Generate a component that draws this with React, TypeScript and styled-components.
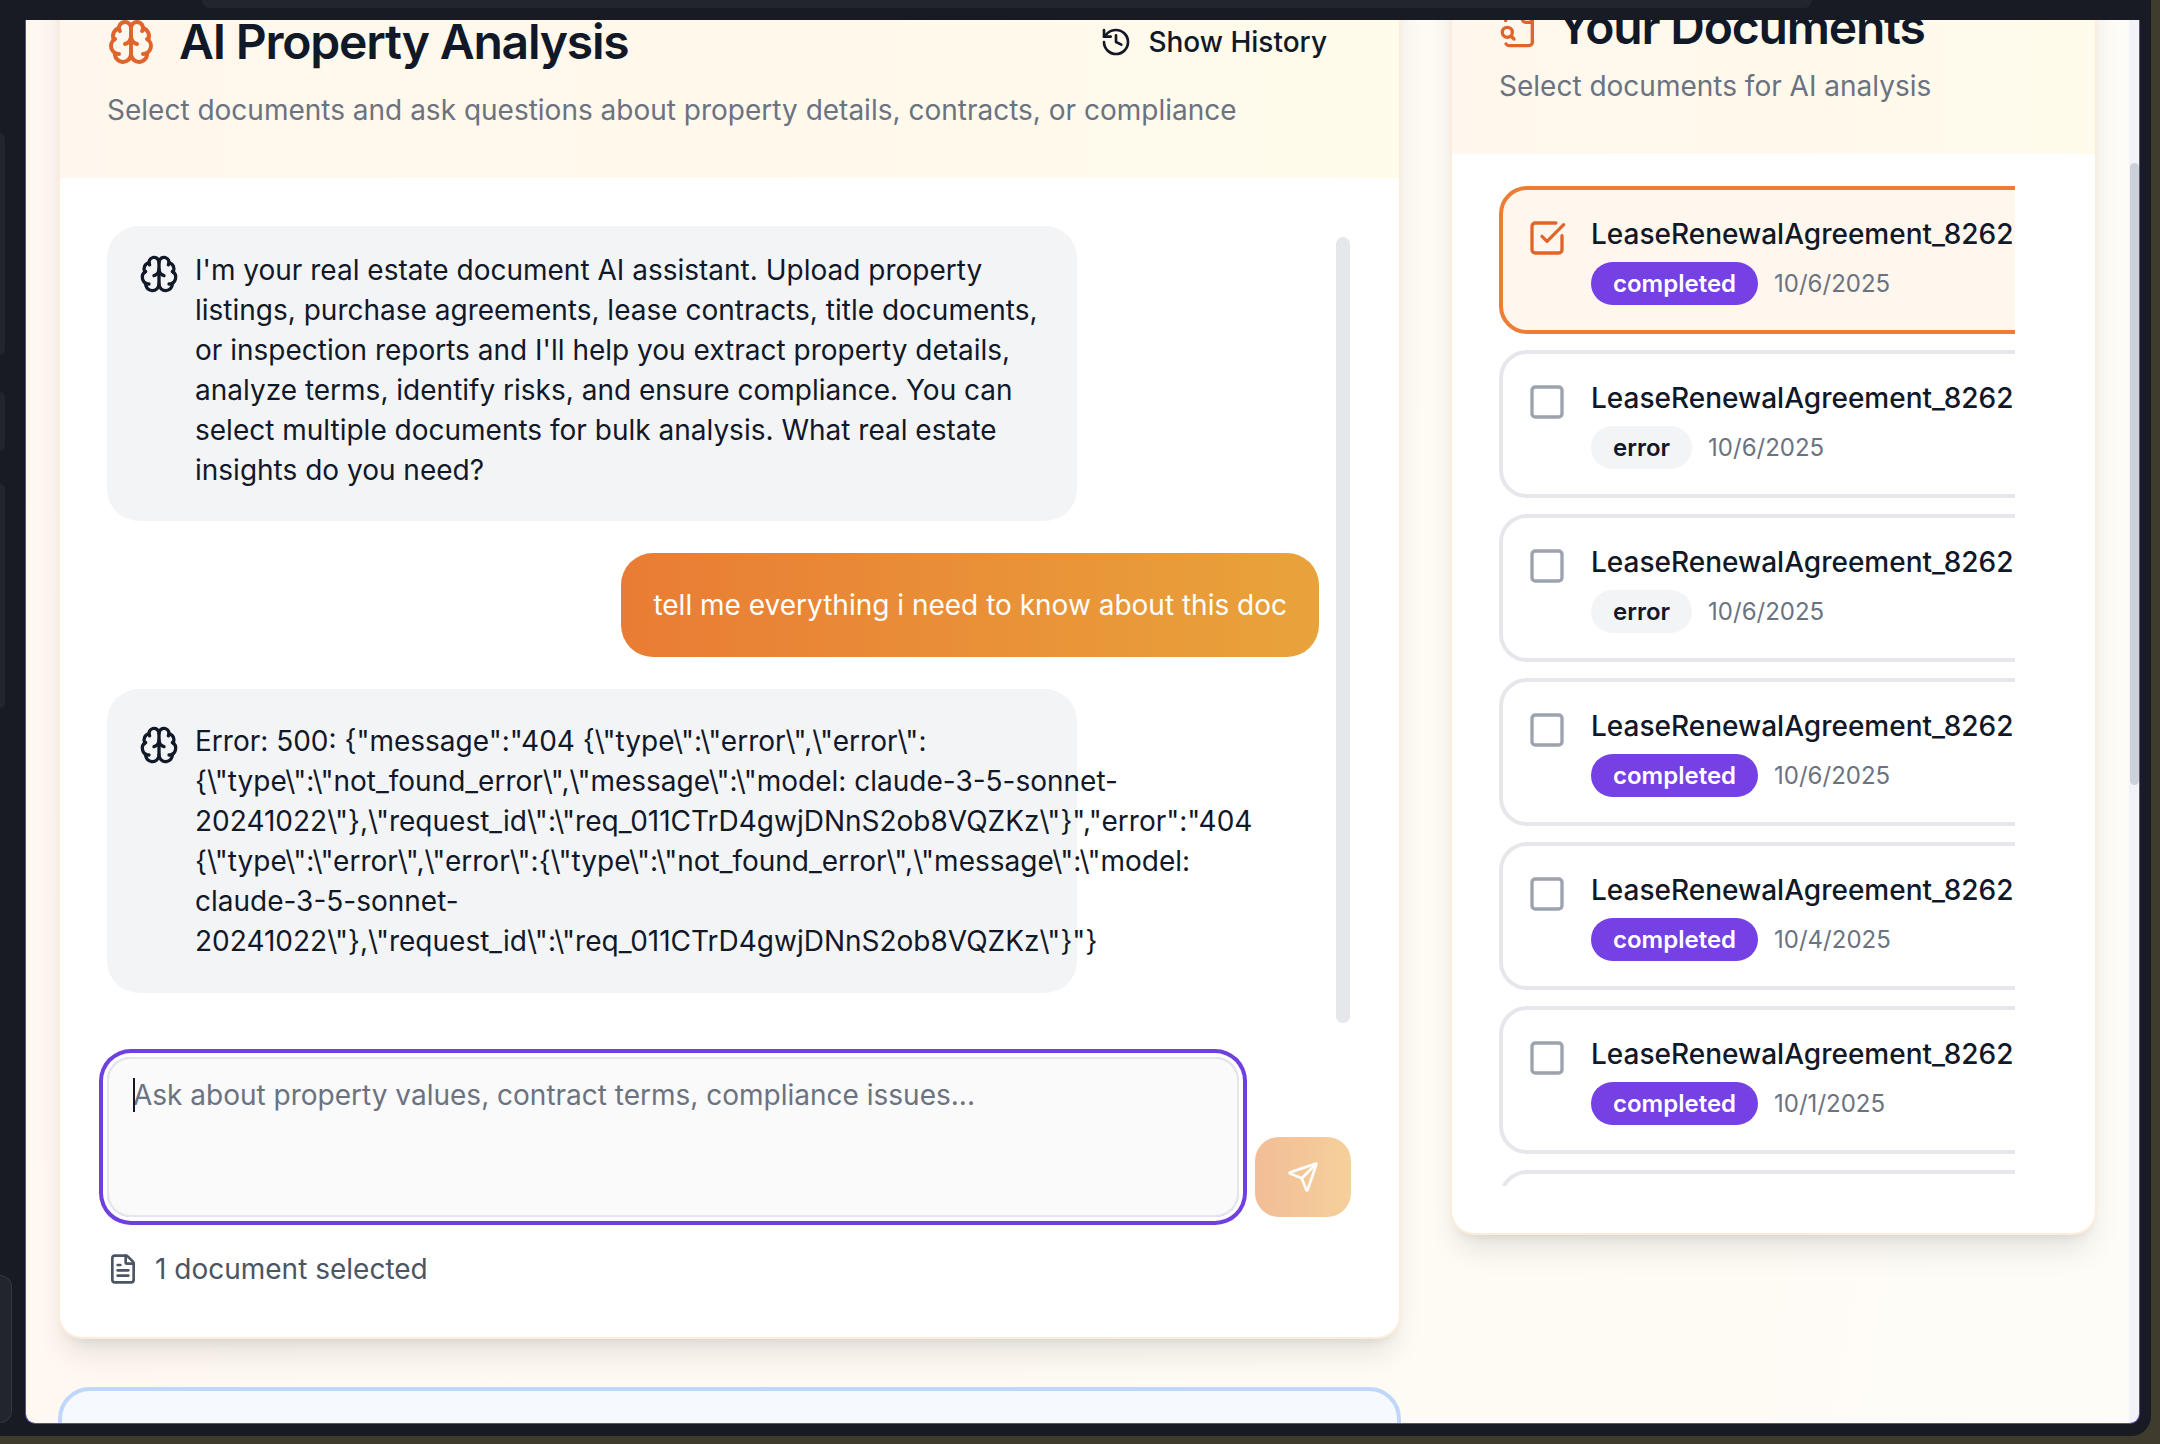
import styled, { createGlobalStyle } from "styled-components";
import { Brain, FileText, History, Send, Square, SquareCheckBig } from "lucide-react";

const GlobalStyle = createGlobalStyle`
  html, body {
    margin: 0;
    padding: 0;
    background: #3f3c2d;
  }
  * {
    box-sizing: border-box;
  }
  body {
    font-family: Inter, "Liberation Sans", sans-serif;
    font-size: 28px;
    line-height: 40px;
    color: #111827;
  }
`;

const Screen = styled.div`
  width: 2160px;
  height: 1444px;
  background: #3f3c2d;
  overflow: hidden;
`;

const Frame = styled.div`
  width: 2151px;
  height: 1436px;
  padding-right: 11px;
  background: #181b23;
  border-bottom-right-radius: 20px;
  display: flex;
  flex-direction: column;
`;

const TopBar = styled.div`
  height: 20px;
  flex-shrink: 0;
  padding-left: 202px;
`;

const TabStrip = styled.div`
  width: 1610px;
  height: 8px;
  background: #22252e;
  border-radius: 0 0 12px 12px;
`;

const Body = styled.div`
  display: flex;
  height: 1404px;
`;

const Rail = styled.div`
  width: 25px;
  flex-shrink: 0;
  display: flex;
  flex-direction: column;
  align-items: flex-start;
`;

const RailItem = styled.div<{ $top: number; $height: number; $width?: number; $bordered?: boolean }>`
  width: ${({ $width }) => $width ?? 5}px;
  height: ${({ $height }) => $height}px;
  margin-top: ${({ $top }) => $top}px;
  background: #22252e;
  border-radius: 0 12px 12px 0;
  border: ${({ $bordered }) => ($bordered ? "1px solid #34373f" : "none")};
  border-left: none;
`;

const Content = styled.div`
  flex: 1;
  min-width: 0;
  display: flex;
  border: 1px solid #5a47b8;
  border-top: none;
  border-radius: 0 0 10px 10px;
  overflow: hidden;
`;

const Main = styled.div`
  flex: 1;
  min-width: 0;
  overflow: hidden;
  padding-left: 32px;
  background: linear-gradient(100deg, #fff8f1 0%, #fefcf6 100%);
`;

const ScrollTrack = styled.div`
  width: 10px;
  flex-shrink: 0;
  background: #f1f3f8;
`;

const ScrollThumb = styled.div`
  width: 9px;
  height: 622px;
  margin: 143px 0 0 1px;
  background: #cbd0db;
  border-radius: 5px;
`;

const Columns = styled.div`
  display: flex;
  align-items: flex-start;
  gap: 49px;
  margin-top: -72px;
`;

const LeftColumn = styled.div`
  width: 1343px;
  flex-shrink: 0;
  display: flex;
  flex-direction: column;
  gap: 48px;
`;

const Card = styled.section<{ $width?: number }>`
  width: ${({ $width }) => ($width ? `${$width}px` : "auto")};
  flex-shrink: 0;
  background: #fff;
  border: 2px solid #fdecd9;
  border-radius: 24px;
  overflow: hidden;
  box-shadow: 0 20px 30px -6px rgba(0, 0, 0, 0.1), 0 8px 12px -8px rgba(0, 0, 0, 0.1);
`;

const CardHeader = styled.header<{ $top: number; $gap: number }>`
  padding: ${({ $top }) => $top}px 46px 48px 47px;
  background: linear-gradient(to right, #fff7ed, #fffbeb);
  display: flex;
  flex-direction: column;
  gap: ${({ $gap }) => $gap}px;
`;

const TitleRow = styled.div`
  display: flex;
  align-items: center;
  justify-content: space-between;
`;

const Title = styled.h2<{ $gap: number }>`
  margin: 0;
  display: flex;
  align-items: center;
  gap: ${({ $gap }) => $gap}px;
  font-size: 48px;
  line-height: 64px;
  font-weight: 600;
  letter-spacing: -1.2px;
  color: #111827;
  svg {
    color: #e0652b;
    flex-shrink: 0;
  }
`;

const Subtitle = styled.p`
  margin: 0;
  color: #6b7280;
`;

const HistoryButton = styled.button`
  display: flex;
  align-items: center;
  gap: 16px;
  padding: 0 26px 0 24px;
  border: none;
  background: none;
  font: inherit;
  font-weight: 500;
  color: #111827;
`;

const ChatBody = styled.div`
  padding: 48px 46px 48px 47px;
`;

const MessageArea = styled.div`
  position: relative;
  height: 799px;
  display: flex;
  flex-direction: column;
  gap: 32px;
`;

const MessageThumb = styled.div`
  position: absolute;
  top: 11px;
  right: 3px;
  width: 14px;
  height: 786px;
  border-radius: 7px;
  background: #e5e7eb;
`;

const AssistantBubble = styled.div<{ $top: number; $bottom: number }>`
  width: 970px;
  padding: ${({ $top }) => $top}px 32px ${({ $bottom }) => $bottom}px;
  background: #f3f4f6;
  border-radius: 32px;
  display: flex;
  gap: 16px;
  svg {
    flex-shrink: 0;
    margin-top: 4px;
  }
`;

const AssistantText = styled.div`
  min-width: 0;
  flex: 1;
`;

const ErrorLine = styled.div`
  white-space: nowrap;
`;

const UserBubble = styled.div`
  align-self: flex-end;
  margin-right: 34px;
  padding: 32px;
  border-radius: 32px;
  color: #fff;
  background: linear-gradient(to right, #e97c34, #e9a33b);
`;

const InputRow = styled.div`
  margin-top: 32px;
  padding-right: 2px;
  display: flex;
  align-items: flex-end;
  gap: 16px;
`;

const InputWrap = styled.div`
  position: relative;
  flex: 1;
  height: 160px;
  border-radius: 24px;
  box-shadow: 0 0 0 4px #fff, 0 0 0 8px #6f3fe0;
`;

const PromptInput = styled.textarea`
  display: block;
  width: 100%;
  height: 100%;
  padding: 16px 24px;
  resize: none;
  border: 2px solid #e5e7eb;
  border-radius: 24px;
  background: #fafafa;
  font: inherit;
  outline: none;
  &::placeholder {
    color: #6b7280;
    opacity: 1;
  }
`;

const Caret = styled.span`
  position: absolute;
  left: 26px;
  top: 21px;
  width: 2px;
  height: 34px;
  background: #111827;
`;

const SendButton = styled.button`
  width: 96px;
  height: 80px;
  flex-shrink: 0;
  display: flex;
  align-items: center;
  justify-content: center;
  border: none;
  border-radius: 24px;
  color: #fff;
  background: linear-gradient(to right, #f2bd97, #f5d09b);
`;

const SelectionNote = styled.div`
  margin-top: 32px;
  display: flex;
  align-items: center;
  gap: 16px;
  color: #4b5563;
`;

const BlueCard = styled.div`
  height: 200px;
  background: #f6f9fe;
  border: 4px solid #bfd7fa;
  border-radius: 32px;
`;

const DocBody = styled.div`
  padding: 32px 46px 47px 47px;
`;

const DocList = styled.div`
  width: 516px;
  height: 1000px;
  overflow: hidden;
  display: flex;
  flex-direction: column;
  gap: 16px;
`;

const DocItem = styled.div<{ $selected?: boolean }>`
  width: 580px;
  height: 148px;
  flex-shrink: 0;
  padding: 24px;
  display: flex;
  gap: 24px;
  border: 4px solid ${({ $selected }) => ($selected ? "#ed7d34" : "#e5e7eb")};
  border-radius: 28px;
  background: ${({ $selected }) => ($selected ? "#fff7ed" : "#fff")};
  svg {
    flex-shrink: 0;
    margin-top: 4px;
    color: ${({ $selected }) => ($selected ? "#e0652b" : "#9ca3af")};
  }
`;

const DocInfo = styled.div`
  display: flex;
  flex-direction: column;
  gap: 8px;
`;

const DocName = styled.div`
  font-weight: 500;
  white-space: nowrap;
  color: #111827;
`;

const DocMeta = styled.div`
  display: flex;
  align-items: center;
  gap: 16px;
`;

const StatusBadge = styled.span<{ $status: string }>`
  height: 43px;
  padding: 0 22px;
  display: flex;
  align-items: center;
  border-radius: 22px;
  font-size: 24px;
  font-weight: 600;
  color: ${({ $status }) => ($status === "completed" ? "#fff" : "#111827")};
  background: ${({ $status }) => ($status === "completed" ? "#7540e4" : "#f3f4f6")};
`;

const DocDate = styled.span`
  font-size: 24px;
  color: #6b7280;
`;

const DocSearchSvg = styled.svg`
  margin-top: 4px;
`;

// the installed lucide FileSearch has the glass inside the page, this one sits outside
const DocSearchIcon = () => (
  <DocSearchSvg
    width="40"
    height="40"
    viewBox="0 0 24 24"
    fill="none"
    stroke="currentColor"
    strokeWidth="2"
    strokeLinecap="round"
    strokeLinejoin="round"
  >
    <path d="M14 2v4a2 2 0 0 0 2 2h4" />
    <path d="M4.268 21a2 2 0 0 0 1.727 1H18a2 2 0 0 0 2-2V7l-5-5H6a2 2 0 0 0-2 2v3" />
    <path d="m9 18-1.5-1.5" />
    <circle cx="5" cy="14" r="3" />
  </DocSearchSvg>
);

const documents = [
  { status: "completed", date: "10/6/2025", selected: true },
  { status: "error", date: "10/6/2025" },
  { status: "error", date: "10/6/2025" },
  { status: "completed", date: "10/6/2025" },
  { status: "completed", date: "10/4/2025" },
  { status: "completed", date: "10/1/2025" },
  { status: "completed", date: "10/1/2025" },
];

const errorLines = [
  'Error: 500: {"message":"404 {\\"type\\":\\"error\\",\\"error\\":',
  '{\\"type\\":\\"not_found_error\\",\\"message\\":\\"model: claude-3-5-sonnet-',
  '20241022\\"},\\"request_id\\":\\"req_011CTrD4gwjDNnS2ob8VQZKz\\"}","error":"404',
  '{\\"type\\":\\"error\\",\\"error\\":{\\"type\\":\\"not_found_error\\",\\"message\\":\\"model:',
  "claude-3-5-sonnet-",
  '20241022\\"},\\"request_id\\":\\"req_011CTrD4gwjDNnS2ob8VQZKz\\"}"}',
];

const App = () => {
  return (
    <Screen>
      <GlobalStyle />
      <Frame>
        <TopBar>
          <TabStrip />
        </TopBar>
        <Body>
          <Rail>
            <RailItem $top={113} $height={222} />
            <RailItem $top={37} $height={59} />
            <RailItem $top={33} $height={224} />
            <RailItem $top={567} $height={148} $width={12} $bordered />
          </Rail>
          <Content>
            <Main>
              <Columns>
                <LeftColumn>
                  <Card>
                    <CardHeader $top={60} $gap={16}>
                      <TitleRow>
                        <Title $gap={24}>
                          <Brain size={48} />
                          AI Property Analysis
                        </Title>
                        <HistoryButton>
                          <History size={32} />
                          Show History
                        </HistoryButton>
                      </TitleRow>
                      <Subtitle>
                        Select documents and ask questions about property details, contracts, or compliance
                      </Subtitle>
                    </CardHeader>
                    <ChatBody>
                      <MessageArea>
                        <AssistantBubble $top={24} $bottom={31}>
                          <Brain size={40} color="#111827" />
                          <AssistantText>
                            I'm your real estate document AI assistant. Upload property listings, purchase
                            agreements, lease contracts, title documents, or inspection reports and I'll help you
                            extract property details, analyze terms, identify risks, and ensure compliance. You can
                            select multiple documents for bulk analysis. What real estate insights do you need?
                          </AssistantText>
                        </AssistantBubble>
                        <UserBubble>tell me everything i need to know about this doc</UserBubble>
                        <AssistantBubble $top={32} $bottom={32}>
                          <Brain size={40} color="#111827" />
                          <AssistantText>
                            {errorLines.map((line, i) => (
                              <ErrorLine key={i}>{line}</ErrorLine>
                            ))}
                          </AssistantText>
                        </AssistantBubble>
                        <MessageThumb />
                      </MessageArea>
                      <InputRow>
                        <InputWrap>
                          <PromptInput placeholder="Ask about property values, contract terms, compliance issues..." />
                          <Caret />
                        </InputWrap>
                        <SendButton>
                          <Send size={32} />
                        </SendButton>
                      </InputRow>
                      <SelectionNote>
                        <FileText size={32} />1 document selected
                      </SelectionNote>
                    </ChatBody>
                  </Card>
                  <BlueCard />
                </LeftColumn>
                <Card $width={647}>
                  <CardHeader $top={45} $gap={7}>
                    <Title $gap={18}>
                      <DocSearchIcon />
                      Your Documents
                    </Title>
                    <Subtitle>Select documents for AI analysis</Subtitle>
                  </CardHeader>
                  <DocBody>
                    <DocList>
                      {documents.map((doc, i) => (
                        <DocItem key={i} $selected={doc.selected}>
                          {doc.selected ? <SquareCheckBig size={40} /> : <Square size={40} />}
                          <DocInfo>
                            <DocName>LeaseRenewalAgreement_8262</DocName>
                            <DocMeta>
                              <StatusBadge $status={doc.status}>{doc.status}</StatusBadge>
                              <DocDate>{doc.date}</DocDate>
                            </DocMeta>
                          </DocInfo>
                        </DocItem>
                      ))}
                    </DocList>
                  </DocBody>
                </Card>
              </Columns>
            </Main>
            <ScrollTrack>
              <ScrollThumb />
            </ScrollTrack>
          </Content>
        </Body>
      </Frame>
    </Screen>
  );
};

export default App;
